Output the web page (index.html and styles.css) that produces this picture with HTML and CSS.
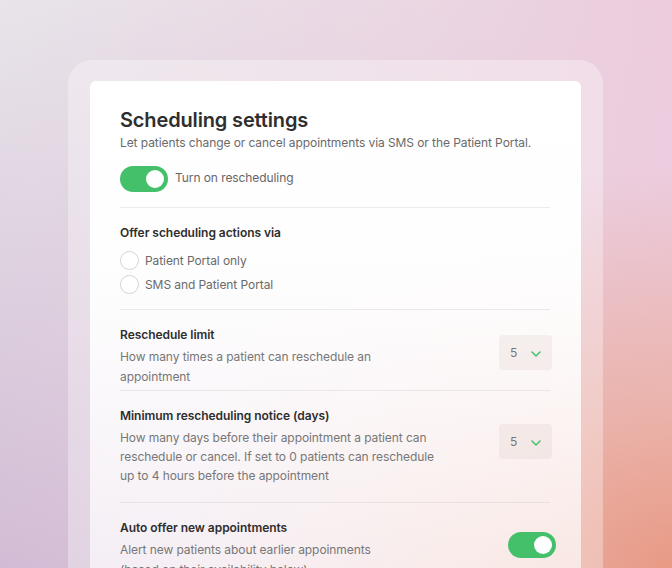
FILE: index.html
```html
<!DOCTYPE html>
<html lang="en">
<head>
<meta charset="utf-8">
<title>Scheduling settings</title>
<link rel="stylesheet" href="styles.css">
</head>
<body>
<div class="stage">
  <div class="frame">
    <div class="card">
      <h1 class="title">Scheduling settings</h1>
      <p class="subtitle">Let patients change or cancel appointments via SMS or the Patient Portal.</p>
      <div class="toggle-row">
        <span class="toggle on"><span class="knob"></span></span>
        <span class="toggle-label">Turn on rescheduling</span>
      </div>

      <div class="section section-radios">
        <div class="label">Offer scheduling actions via</div>
        <div class="radios">
          <div class="radio-row"><span class="radio"></span><span class="radio-text">Patient Portal only</span></div>
          <div class="radio-row"><span class="radio"></span><span class="radio-text">SMS and Patient Portal</span></div>
        </div>
      </div>

      <div class="section section-limit row">
        <div class="row-text">
          <div class="label">Reschedule limit</div>
          <p class="desc">How many times a patient can reschedule an<br>appointment</p>
        </div>
        <div class="select select-limit"><span class="select-value">5</span>
          <svg class="chev" width="10" height="6" viewBox="0 0 10 6"><path d="M1 1l4 4 4-4" fill="none" stroke="#45c06a" stroke-width="1.5" stroke-linecap="round" stroke-linejoin="round"/></svg>
        </div>
      </div>

      <div class="section section-notice row">
        <div class="row-text">
          <div class="label">Minimum rescheduling notice (days)</div>
          <p class="desc desc-notice">How many days before their appointment a patient can<br>reschedule or cancel. If set to 0 patients can reschedule<br>up to 4 hours before the appointment</p>
        </div>
        <div class="select select-notice"><span class="select-value">5</span>
          <svg class="chev" width="10" height="6" viewBox="0 0 10 6"><path d="M1 1l4 4 4-4" fill="none" stroke="#45c06a" stroke-width="1.5" stroke-linecap="round" stroke-linejoin="round"/></svg>
        </div>
      </div>

      <div class="section section-auto row">
        <div class="row-text">
          <div class="label">Auto offer new appointments</div>
          <p class="desc">Alert new patients about earlier appoinments<br>(based on their availability below)</p>
        </div>
        <span class="toggle on toggle-auto"><span class="knob"></span></span>
      </div>
    </div>
  </div>
</div>
</body>
</html>
```

FILE: styles.css
```css
html, body {
  margin: 0;
  padding: 0;
  height: 568px;
  overflow: hidden;
}
body {
  font-family: Inter, "Noto Sans", sans-serif;
  color: #333;
  background:
    radial-gradient(ellipse 75% 70% at 100% 100%, rgba(232,154,132,1) 0%, rgba(234,168,150,0.7) 40%, rgba(236,190,200,0) 100%),
    linear-gradient(to right, rgba(236,206,222,0) 0%, rgba(236,206,222,0.6) 60%, rgba(236,204,222,1) 100%),
    linear-gradient(to bottom, #e8e4ea 0%, #ddd0df 50%, #d2bcd5 100%);
}
.stage {
  padding: 60px 69px 0 68px;
}
.frame {
  background: rgba(255,255,255,0.32);
  border-radius: 24px 24px 0 0;
  padding: 21px 22px 0 22px;
  height: 600px;
}
.card {
  background: linear-gradient(to bottom, #ffffff 0%, rgba(255,255,255,0.96) 30%, rgba(255,255,255,0.72) 65%, rgba(255,255,255,0.5) 100%);
  border-radius: 6px 6px 0 0;
  padding: 25px 31px 0 30px;
  height: 580px;
}
.title {
  margin: 0;
  font-size: 20px;
  line-height: 28px;
  font-weight: 600;
  color: #2e2e2e;
  letter-spacing: -0.15px;
}
.subtitle {
  margin: 0;
  font-size: 12px;
  line-height: 17px;
  color: #6a6a6a;
  letter-spacing: -0.08px;
}
.toggle-row {
  display: flex;
  align-items: center;
  gap: 7px;
  margin-top: 15px;
  padding-bottom: 15px;
}
.toggle {
  display: inline-flex;
  align-items: center;
  justify-content: flex-end;
  box-sizing: border-box;
  width: 48px;
  height: 26px;
  border-radius: 13px;
  background: #45c06a;
  padding: 4px;
  flex-shrink: 0;
}
.knob {
  width: 18px;
  height: 18px;
  border-radius: 50%;
  background: #fff;
}
.toggle-label {
  font-size: 12px;
  line-height: 18px;
  color: #666;
  letter-spacing: -0.08px;
  margin-bottom: 3px;
}
.section {
  border-top: 1px solid rgba(200,190,190,0.3);
  padding-top: 16px;
}
.label {
  font-size: 12px;
  line-height: 18px;
  font-weight: 600;
  color: #2e2e2e;
  letter-spacing: -0.05px;
}
.radios {
  margin-top: 6px;
  padding-bottom: 13px;
}
.radio-row {
  display: flex;
  align-items: center;
  gap: 6px;
  height: 24px;
}
.radio {
  box-sizing: border-box;
  width: 19px;
  height: 19px;
  border-radius: 50%;
  border: 1.5px solid #d6d3d3;
  background: #fff;
}
.radio-text {
  font-size: 12px;
  color: #6a6a6a;
  letter-spacing: -0.08px;
}
.row {
  display: flex;
  justify-content: space-between;
  align-items: flex-start;
}
.desc {
  margin: 3px 0 0 0;
  font-size: 12px;
  line-height: 20px;
  color: #777;
  letter-spacing: -0.08px;
}
.desc-notice {
  line-height: 19px;
}
.section-limit {
  padding-bottom: 3px;
}
.section-notice {
  padding-bottom: 17px;
}
.select {
  display: flex;
  align-items: center;
  justify-content: space-between;
  box-sizing: border-box;
  width: 53px;
  height: 35px;
  padding: 0 11px 0 11px;
  border-radius: 4px;
  background: rgba(150,110,100,0.08);
  margin-right: -2px;
}
.select-limit {
  margin-top: 9px;
}
.select-notice {
  margin-top: 17px;
}
.select-value {
  font-size: 12px;
  color: #777;
}
.chev {
  margin-top: 3px;
}
.toggle-auto {
  margin-top: 13px;
  margin-right: -6px;
}
```
